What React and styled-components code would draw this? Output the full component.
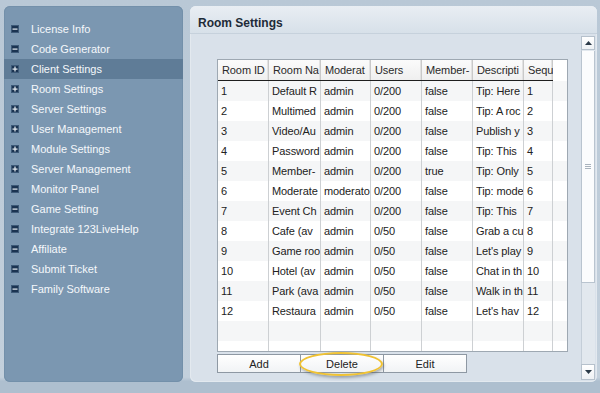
import React from 'react';
import styled, { createGlobalStyle } from 'styled-components';

const Global = createGlobalStyle`
  html, body { margin: 0; padding: 0; }
  body { background: #bccad8; font-family: "Liberation Sans", Arial, sans-serif; }
`;

const Page = styled.div`
  width: 600px;
  height: 393px;
  box-sizing: border-box;
  padding: 6px 3px 11px 4px;
  display: flex;
  gap: 7px;
  background: linear-gradient(#b9c8d6 0%, #c3d0dc 96%, #aebfcf 97%);
`;

const Sidebar = styled.nav`
  width: 179px;
  flex: none;
  background: #7b97b1;
  border-radius: 6px;
  padding-top: 13px;
  box-sizing: border-box;
  box-shadow: inset 0 0 0 1px #7390aa;
`;

const NavItem = styled.div`
  height: 20px;
  display: flex;
  align-items: center;
  gap: 12px;
  padding-left: 7px;
  font-size: 11px;
  color: #f5f8fb;
  background: ${p => (p.$active ? '#5f7c97' : 'transparent')};
`;

const Toggle = ({ open }) => (
  <svg width="8" height="8" viewBox="0 0 8 8" style={{ flex: 'none' }}>
    <rect x="0" y="0" width="8" height="8" fill="#1b3452" />
    <rect x="0.5" y="0.5" width="7" height="7" fill="none" stroke="#3d5a78" strokeWidth="1" />
    <rect x="1.5" y="3.5" width="5" height="1.2" fill="#e8eef4" />
    {!open && <rect x="3.4" y="1.5" width="1.2" height="5" fill="#e8eef4" />}
  </svg>
);

const Main = styled.section`
  flex: 1;
  display: flex;
  flex-direction: column;
  background: #d9e1ea;
  border-radius: 6px;
  overflow: hidden;
  box-shadow: inset 0 0 0 1px #e3e9ef;
`;

const Header = styled.header`
  height: 28px;
  box-sizing: border-box;
  flex: none;
  display: flex;
  align-items: center;
  padding: 7px 0 0 8px;
  font-size: 12px;
  font-weight: bold;
  color: #1e2b38;
  background: linear-gradient(#e9eef3, #d7e0e9);
  border-bottom: 1px solid #c6d1dc;
`;

const Body = styled.div`
  flex: 1;
  display: flex;
  min-height: 0;
`;

const Content = styled.div`
  flex: 1;
  padding: 25px 13px 0 27px;
`;

const Table = styled.div`
  width: 351px;
  height: 293px;
  box-sizing: border-box;
  border: 1px solid #9ea8b2;
  background: #fff;
  overflow: hidden;
`;

const cols = '51px 52px 50px 51px 51px 51px 29px';

const HeadRow = styled.div`
  display: grid;
  grid-template-columns: ${cols};
  width: 335px;
  height: 21px;
  box-sizing: border-box;
  border-bottom: 1px solid #1e1e1e;
`;

const HeadCell = styled.div`
  font-size: 11px;
  letter-spacing: -0.1px;
  color: #2a2a2a;
  padding-left: 4px;
  line-height: 20px;
  white-space: nowrap;
  overflow: hidden;
  background: linear-gradient(#fbfbfb, #efefef);
  box-shadow: inset -1px 0 #c9c9c9, inset -2px 0 #e2e2e2;
`;

const Row = styled.div`
  display: grid;
  grid-template-columns: ${cols};
  width: 349px;
  height: 20px;
  background: ${p => (p.$odd ? '#f5f6f7' : '#ffffff')};
`;

const Cell = styled.div`
  font-size: 11px;
  letter-spacing: -0.1px;
  color: #222;
  padding-left: 3px;
  line-height: 20px;
  white-space: nowrap;
  overflow: hidden;
  border-right: 1px solid #cdd0d3;
`;

const ButtonRow = styled.div`
  display: flex;
  margin-top: 2px;
  position: relative;
`;

const Button = styled.button`
  width: 84px;
  height: 19px;
  margin-left: ${p => (p.$first ? '0' : '-1px')};
  padding: 0;
  border: 1px solid #8e98a3;
  background: linear-gradient(#ffffff, #f1f3f5);
  font-family: "Liberation Sans", Arial, sans-serif;
  font-size: 11px;
  color: #222;
`;

const Highlight = styled.div`
  position: absolute;
  left: 82px;
  top: -2px;
  width: 84px;
  height: 24px;
  box-sizing: border-box;
  border: 2px solid #f0c232;
  border-radius: 50%;
  box-shadow: 1px 2px 3px rgba(60, 70, 80, 0.4);
  pointer-events: none;
`;

const ScrollBar = styled.div`
  width: 14px;
  flex: none;
  margin: 2px 2px 2px 0;
  display: flex;
  flex-direction: column;
  background: #e2e8ee;
  box-shadow: inset 1px 0 #c4ced8;
`;

const ScrollBtn = styled.div`
  height: ${p => p.$h}px;
  flex: none;
  display: flex;
  align-items: center;
  justify-content: center;
  background: linear-gradient(#ffffff, #eef1f4);
  border: 1px solid #b6c1cc;
  box-sizing: border-box;
`;

const Track = styled.div`
  flex: 1;
  display: flex;
  flex-direction: column;
`;

const Thumb = styled.div`
  height: 232px;
  margin-top: 1px;
  background: #fbfcfd;
  border: 1px solid #b9c4cf;
  border-top: none;
  box-sizing: border-box;
  display: flex;
  align-items: center;
  justify-content: center;
`;

const Grip = styled.div`
  width: 6px;
  height: 5px;
  background: repeating-linear-gradient(#a9b3bd 0 1px, transparent 1px 2px);
`;

const Arrow = ({ down }) => (
  <svg width="7" height="4" viewBox="0 0 7 4">
    <polygon points={down ? '0,0 7,0 3.5,4' : '0,4 7,4 3.5,0'} fill="#2b3a48" />
  </svg>
);

const menu = [
  ['License Info', true],
  ['Code Generator', true],
  ['Client Settings', false, true],
  ['Room Settings', false],
  ['Server Settings', false],
  ['User Management', false],
  ['Module Settings', false],
  ['Server Management', false],
  ['Monitor Panel', true],
  ['Game Setting', true],
  ['Integrate 123LiveHelp', true],
  ['Affiliate', true],
  ['Submit Ticket', true],
  ['Family Software', true],
];

const headers = ['Room ID', 'Room Na', 'Moderat', 'Users', 'Member-', 'Descripti', 'Sequ'];

const rows = [
  ['1', 'Default R', 'admin', '0/200', 'false', 'Tip: Here', '1'],
  ['2', 'Multimed', 'admin', '0/200', 'false', 'Tip: A roc', '2'],
  ['3', 'Video/Au', 'admin', '0/200', 'false', 'Publish y', '3'],
  ['4', 'Password', 'admin', '0/200', 'false', 'Tip: This', '4'],
  ['5', 'Member-', 'admin', '0/200', 'true', 'Tip: Only', '5'],
  ['6', 'Moderate', 'moderato', '0/200', 'false', 'Tip: mode', '6'],
  ['7', 'Event Ch', 'admin', '0/200', 'false', 'Tip: This', '7'],
  ['8', 'Cafe (av', 'admin', '0/50', 'false', 'Grab a cu', '8'],
  ['9', 'Game roo', 'admin', '0/50', 'false', "Let's play", '9'],
  ['10', 'Hotel (av', 'admin', '0/50', 'false', 'Chat in th', '10'],
  ['11', 'Park (ava', 'admin', '0/50', 'false', 'Walk in th', '11'],
  ['12', 'Restaura', 'admin', '0/50', 'false', "Let's hav", '12'],
  ['', '', '', '', '', '', ''],
  ['', '', '', '', '', '', ''],
];

export default function App() {
  return (
    <>
      <Global />
      <Page>
        <Sidebar>
          {menu.map(([label, open, active]) => (
            <NavItem key={label} $active={active}>
              <Toggle open={open} />
              {label}
            </NavItem>
          ))}
        </Sidebar>
        <Main>
          <Header>Room Settings</Header>
          <Body>
            <Content>
              <Table>
                <HeadRow>
                  {headers.map(h => (
                    <HeadCell key={h}>{h}</HeadCell>
                  ))}
                </HeadRow>
                {rows.map((r, i) => (
                  <Row key={i} $odd={i % 2 === 0}>
                    {r.map((c, j) => (
                      <Cell key={j}>{c}</Cell>
                    ))}
                  </Row>
                ))}
              </Table>
              <ButtonRow>
                <Button $first>Add</Button>
                <Button>Delete</Button>
                <Button>Edit</Button>
                <Highlight />
              </ButtonRow>
            </Content>
            <ScrollBar>
              <ScrollBtn $h={14}>
                <Arrow />
              </ScrollBtn>
              <Track>
                <Thumb>
                  <Grip />
                </Thumb>
              </Track>
              <ScrollBtn $h={16}>
                <Arrow down />
              </ScrollBtn>
            </ScrollBar>
          </Body>
        </Main>
      </Page>
    </>
  );
}
